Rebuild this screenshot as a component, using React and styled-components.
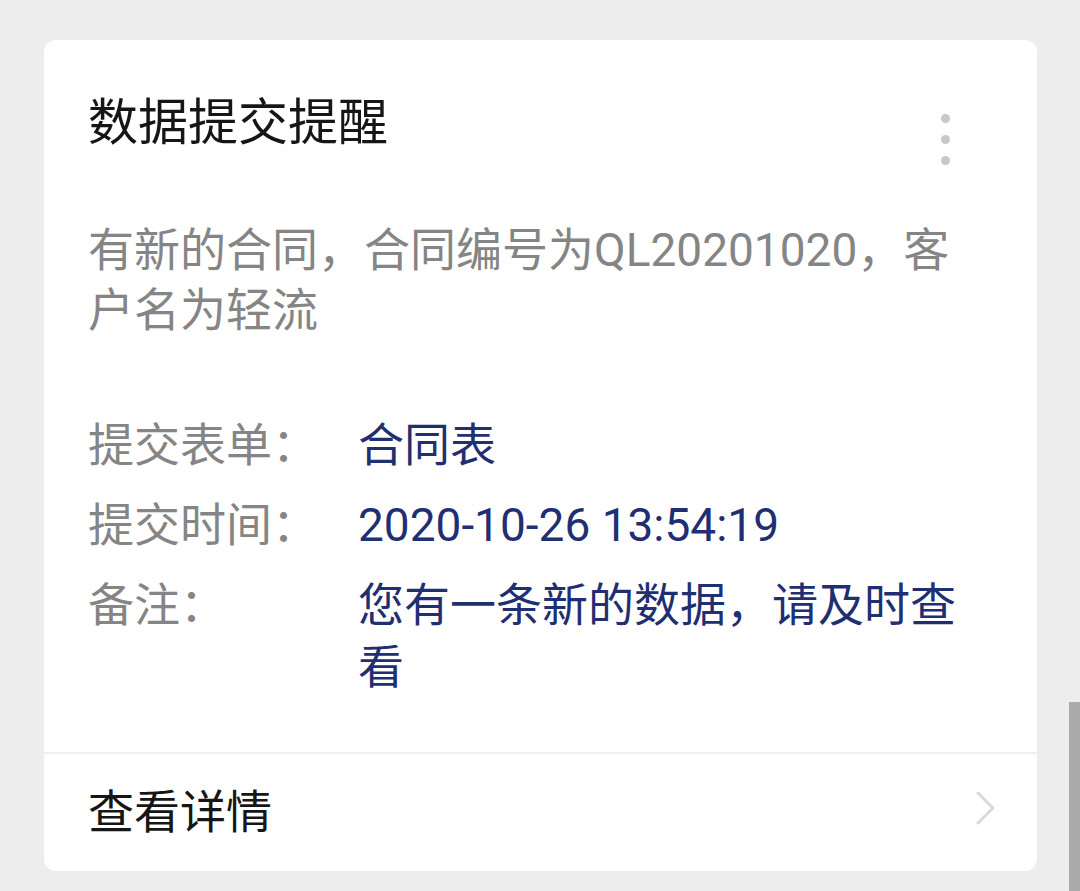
import React from 'react';
import styled, { createGlobalStyle } from 'styled-components';

const GlobalStyle = createGlobalStyle`
  html, body {
    margin: 0;
    padding: 0;
    background: #ededed;
  }
  body {
    font-family: Roboto, "Noto Sans CJK SC", "Noto Sans", sans-serif;
  }
`;

const details = [
  { label: '提交表单：', value: '合同表' },
  { label: '提交时间：', value: '2020-10-26 13:54:19' },
  { label: '备注：', value: '您有一条新的数据，请及时查看' },
];

const Page = styled.div`
  position: relative;
  box-sizing: border-box;
  min-height: 891px;
  padding: 40px 43px 20px 44px;
  border-left: 2px solid #6b6b6b;
  margin-left: -2px;
  overflow: hidden;
`;

const Card = styled.section`
  background: #fff;
  border-radius: 12px;
  overflow: hidden;
`;

const Header = styled.header`
  display: flex;
  justify-content: space-between;
  align-items: flex-start;
  padding: 53px 87px 0 44px;
`;

const Title = styled.h1`
  margin: 0;
  font-size: 50px;
  line-height: 60px;
  font-weight: 400;
  color: #161616;
`;

const MoreButton = styled.div`
  display: flex;
  flex-direction: column;
  gap: 12px;
  margin-top: 21px;
`;

const Dot = styled.span`
  display: block;
  width: 9px;
  height: 9px;
  border-radius: 50%;
  background: #c8c8cc;
`;

const Body = styled.div`
  padding: 0 70px 0 44px;
`;

const Description = styled.p`
  margin: 55px 0 0;
  font-size: 46px;
  line-height: 60px;
  color: #858585;
`;

const InfoList = styled.dl`
  display: flex;
  flex-direction: column;
  gap: 18px;
  margin: 74px 0 54px;
`;

const InfoRow = styled.div`
  display: flex;
  font-size: 46px;
  line-height: 62px;
`;

const Label = styled.dt`
  flex: 0 0 270px;
  color: #858585;
`;

const Value = styled.dd`
  flex: 1;
  margin: 0;
  color: #1f2f72;
`;

const Footer = styled.footer`
  box-sizing: border-box;
  display: flex;
  align-items: center;
  justify-content: space-between;
  height: 119px;
  padding: 0 40px 10px 44px;
  border-top: 2px solid #efefef;
`;

const FooterText = styled.span`
  font-size: 46px;
  color: #161616;
`;

const Scrollbar = styled.div`
  position: absolute;
  right: 0;
  top: 702px;
  bottom: 0;
  width: 11px;
  background: #aaaaaa;
`;

const Chevron = () => (
  <svg width="22" height="36" viewBox="0 0 22 36" fill="none">
    <path d="M3 3 L18 18 L3 33" stroke="#dadada" strokeWidth="3" strokeLinecap="round" strokeLinejoin="round" />
  </svg>
);

export default function App() {
  return (
    <>
      <GlobalStyle />
      <Page>
        <Card>
          <Header>
            <Title>数据提交提醒</Title>
            <MoreButton>
              <Dot />
              <Dot />
              <Dot />
            </MoreButton>
          </Header>
          <Body>
            <Description>有新的合同，合同编号为QL20201020，客户名为轻流</Description>
            <InfoList>
              {details.map((item) => (
                <InfoRow key={item.label}>
                  <Label>{item.label}</Label>
                  <Value>{item.value}</Value>
                </InfoRow>
              ))}
            </InfoList>
          </Body>
          <Footer>
            <FooterText>查看详情</FooterText>
            <Chevron />
          </Footer>
        </Card>
        <Scrollbar />
      </Page>
    </>
  );
}
